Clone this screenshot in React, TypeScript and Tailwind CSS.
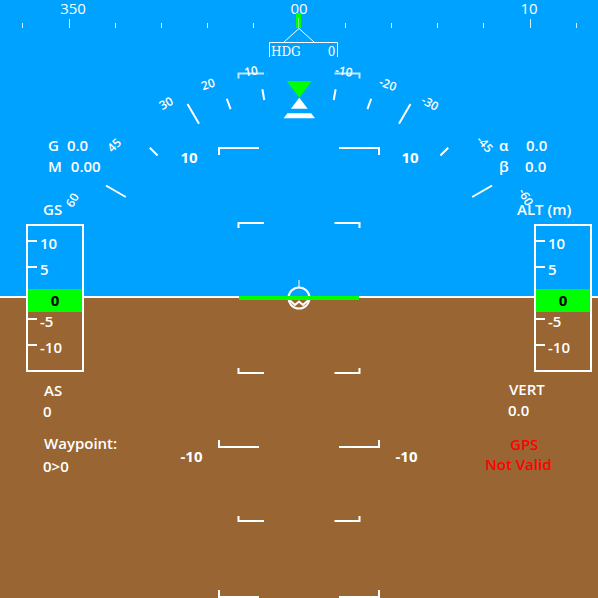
import React from 'react';

const CX = 299;
const CY = 297;

function polar(angle: number, r: number): [number, number] {
  const a = (angle * Math.PI) / 180;
  return [CX + r * Math.sin(a), CY - r * Math.cos(a)];
}

const rollAngles = [10, 20, 30, 45, 60];

const rollLabels = [
  { t: '10', x: 251, y: 71, a: -10 },
  { t: '20', x: 208, y: 84, a: -20 },
  { t: '30', x: 166, y: 103, a: -30 },
  { t: '45', x: 114, y: 145, a: -45 },
  { t: '60', x: 72, y: 200, a: -60 },
  { t: '-10', x: 344, y: 71, a: 10 },
  { t: '-20', x: 388, y: 84, a: 20 },
  { t: '-30', x: 430, y: 103, a: 30 },
  { t: '-45', x: 485, y: 144, a: 48 },
  { t: '-60', x: 526, y: 197, a: 62 },
];

// pitch ladder: y, long or short line, ticks pointing up (below horizon)
const ladder = [
  { y: 73.5, long: false, up: false, o: 0.75 },
  { y: 148, long: true, up: false, o: 1 },
  { y: 223, long: false, up: false, o: 1 },
  { y: 373, long: false, up: true, o: 1 },
  { y: 447, long: true, up: true, o: 1 },
  { y: 521, long: false, up: true, o: 1 },
  { y: 597, long: true, up: true, o: 1 },
];

const tapeMarks = [
  { v: '10', cls: 'top-[5px]' },
  { v: '5', cls: 'top-[31px]' },
  { v: '-5', cls: 'top-[83px]' },
  { v: '-10', cls: 'top-[109px]' },
];

function Tape() {
  return (
    <div className="relative w-[58px] h-[148px] border-2 border-white">
      {tapeMarks.map((m) => (
        <div key={m.v} className={`absolute left-0 flex items-center h-[20px] ${m.cls}`}>
          <div className="w-[9px] h-[2px] bg-white" />
          <span className="ml-[3px] translate-y-[2px] leading-[20px]">{m.v}</span>
        </div>
      ))}
      <div className="absolute left-0 right-0 top-[63px] h-[23px] bg-[#00ff00] flex items-center justify-center text-black font-bold text-[15px]">
        0
      </div>
    </div>
  );
}

function Attitude() {
  const headingTicks = Array.from({ length: 13 }, (_, i) => i - 6);
  return (
    <svg className="absolute inset-0" width={598} height={598} viewBox="0 0 598 598">
      {/* heading tape */}
      {headingTicks.map((k) => {
        const x = Math.round(CX + k * 46.1) + 0.5;
        const major = k % 5 === 0;
        return (
          <line key={k} x1={x} x2={x} y1={major ? 19 : 23} y2={28} stroke="white" strokeWidth={1} strokeOpacity={0.85} />
        );
      })}
      <g fill="white" fontSize={15} fontWeight={400} fontFamily="'Open Sans', sans-serif" textAnchor="middle">
        <text x={73} y={14}>350</text>
        <text x={299} y={14}>00</text>
        <text x={529} y={14}>10</text>
      </g>
      <rect x={296} y={13} width={5} height={15} fill="#00ff00" />
      <line x1={298.5} x2={298.5} y1={18} y2={28} stroke="white" strokeOpacity={0.5} />
      <path d="M284 42 L299 28.5 L314 42" stroke="white" strokeWidth={1} fill="none" />
      <path d="M269.5 57 V42.5 H337.5 V57" stroke="white" strokeWidth={1} fill="none" />
      <g fill="white" fontSize={12} fontWeight={400} fontFamily="'DejaVu Serif', serif">
        <text x={271} y={56}>HDG</text>
        <text x={335.5} y={56} textAnchor="end">0</text>
      </g>

      {/* roll scale */}
      {rollAngles.flatMap((a) =>
        [-1, 1].map((s) => {
          const major = a === 30 || a === 60;
          const [x1, y1] = polar(s * a, 200);
          const [x2, y2] = polar(s * a, major ? 223 : 211);
          return <line key={`${a}${s}`} x1={x1} y1={y1} x2={x2} y2={y2} stroke="white" strokeWidth={2} />;
        })
      )}
      <g fill="white" fontSize={12} fontWeight={600} fontFamily="'Open Sans', sans-serif" textAnchor="middle">
        {rollLabels.map((l) => (
          <text key={l.t} transform={`translate(${l.x} ${l.y}) rotate(${l.a})`} y={4.5}>
            {l.t}
          </text>
        ))}
      </g>
      <polygon points="286.7,81 311.7,81 299.3,97.7" fill="#00ff00" />
      <polygon points="299.3,97.7 307.7,108.7 290.9,108.7" fill="white" />
      <polygon points="287.4,113.3 311.2,113.3 315,118.3 283.6,118.3" fill="white" />

      {/* pitch ladder */}
      {ladder.map((p) => {
        const t = p.up ? (p.long ? -7 : -5) : p.long ? 7 : 5;
        const l1 = p.long ? 219 : 238.5;
        const l2 = p.long ? 259 : 264;
        const r1 = p.long ? 339 : 334.5;
        const r2 = p.long ? 379 : 359.5;
        return (
          <g key={p.y} stroke="white" strokeWidth={2} fill="none" strokeOpacity={p.o}>
            <path d={`M${l1} ${p.y + t} V${p.y} H${l2}`} />
            <path d={`M${r1} ${p.y} H${r2} V${p.y + t}`} />
          </g>
        );
      })}
      <g fill="white" fontSize={15} fontWeight={700} fontFamily="'Open Sans', sans-serif" textAnchor="middle">
        <text x={189} y={163}>10</text>
        <text x={410} y={163}>10</text>
        <text x={191.5} y={462}>-10</text>
        <text x={406.5} y={462}>-10</text>
      </g>

      {/* aircraft symbol */}
      <line x1={299} x2={299} y1={280} y2={287} stroke="white" strokeWidth={1.5} strokeOpacity={0.7} />
      <circle cx={299} cy={298} r={10.5} stroke="white" strokeWidth={2} fill="none" />
      <path d="M290 300.5 L295 305 L299 301.5 L303 305 L308 300.5" stroke="white" strokeWidth={2} fill="none" />
      <rect x={239} y={296} width={120} height={4} fill="#00ff00" />
    </svg>
  );
}

export default function App() {
  const line = 'h-[20px] leading-[20px] whitespace-pre';
  return (
    <div className="relative w-[598px] h-[598px] overflow-hidden flex flex-col font-['Open_Sans',sans-serif] text-white text-[15px] font-semibold">
      <div className="h-[296px] bg-[#00a2ff]" />
      <div className="h-[2px] bg-white" />
      <div className="flex-1 bg-[#996633]" />

      <Attitude />

      <div className="absolute inset-0 flex justify-between">
        <div className="flex flex-col pl-[26px] pt-[135px]">
          <div className={`${line} ml-[22px] flex`}>
            <span>G</span>
            <span className="ml-[8px]">0.0</span>
          </div>
          <div className={`${line} ml-[22px] mt-[1px] flex`}>
            <span>M</span>
            <span className="ml-[9px]">0.00</span>
          </div>
          <div className={`${line} ml-[17px] mt-[23px]`}>GS</div>
          <div className="mt-[5px]">
            <Tape />
          </div>
          <div className={`${line} ml-[18px] mt-[8px]`}>AS</div>
          <div className={`${line} ml-[17px] mt-[1px]`}>0</div>
          <div className={`${line} ml-[18px] mt-[12px]`}>Waypoint:</div>
          <div className={`${line} ml-[17px] mt-[3px]`}>0&gt;0</div>
        </div>

        <div className="flex flex-col w-[113px] pt-[135px]">
          <div className={`${line} ml-[14px] flex`}>
            <span className="w-[27px]">α</span>
            <span>0.0</span>
          </div>
          <div className={`${line} ml-[14px] mt-[1px] flex`}>
            <span className="w-[26px]">β</span>
            <span>0.0</span>
          </div>
          <div className={`${line} ml-[32px] mt-[23px]`}>ALT (m)</div>
          <div className="mt-[5px] ml-[49px]">
            <Tape />
          </div>
          <div className={`${line} ml-[24px] mt-[7px]`}>VERT</div>
          <div className={`${line} ml-[23px] mt-[1px]`}>0.0</div>
          <div className={`${line} ml-[25px] mt-[14px] text-[#ff0000]`}>GPS</div>
          <div className={`${line} text-[#ff0000]`}>Not Valid</div>
        </div>
      </div>
    </div>
  );
}
